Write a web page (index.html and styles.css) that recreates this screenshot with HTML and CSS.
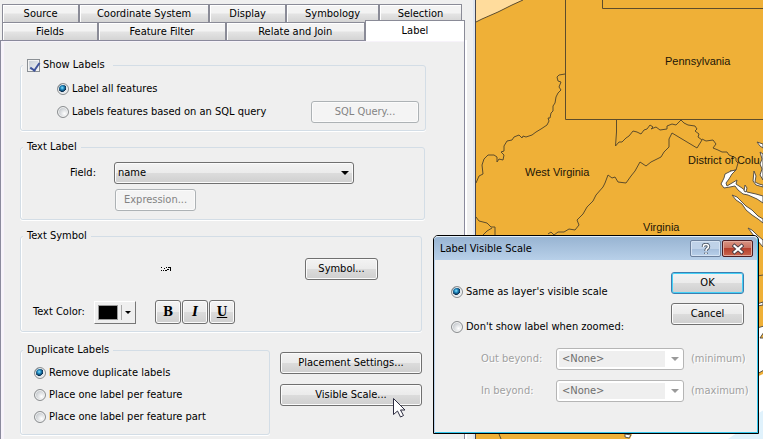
FILE: index.html
```html
<!DOCTYPE html>
<html lang="en">
<head>
<meta charset="utf-8">
<title>Label Visible Scale</title>
<link rel="stylesheet" href="styles.css">
</head>
<body>
<main class="workspace">
  <section class="properties">
    <nav class="tabs">
      <div class="tab-row back">
        <button class="tab t-source">Source</button>
        <button class="tab t-coord">Coordinate System</button>
        <button class="tab t-display">Display</button>
        <button class="tab t-symb">Symbology</button>
        <button class="tab t-select">Selection</button>
      </div>
      <div class="tab-row front">
        <button class="tab t-fields">Fields</button>
        <button class="tab t-filter">Feature Filter</button>
        <button class="tab t-relate">Relate and Join</button>
        <button class="tab active">Label</button>
      </div>
    </nav>
    <form class="page">
      <fieldset class="group show">
        <legend class="check-legend"><label class="option"><input class="check" type="checkbox" checked>Show Labels</label></legend>
        <label class="option"><input class="radio" type="radio" name="which" checked>Label all features</label>
        <div class="split">
          <label class="option"><input class="radio" type="radio" name="which">Labels features based on an SQL query</label>
          <button class="btn sql" type="button" disabled>SQL Query...</button>
        </div>
      </fieldset>

      <fieldset class="group text-label">
        <legend>Text Label</legend>
        <label class="field-name" for="field">Field:</label>
        <span class="combo"><select id="field"><option>name</option></select></span>
        <button class="btn expression" type="button" disabled>Expression...</button>
      </fieldset>

      <fieldset class="group text-symbol">
        <legend>Text Symbol</legend>
        <div class="sample-row">
          <svg class="sample" viewBox="0 0 12 6" aria-hidden="true"><path d="M1 1h1v1H1zM1 4h1v1H1zM3 4h1v1H3zM5 4h2v1H5zM4 2h1v1H4zM6 1h1v1H6zM7 3h1v1H7zM8 1h3v1H8zM10 1h1v4h-1zM8 3h1v1H8z"/></svg>
          <button class="btn symbol" type="button">Symbol...</button>
        </div>
        <div class="style-row">
          <span class="color-name" id="color-name">Text Color:</span>
          <button class="color" type="button" aria-labelledby="color-name"><span class="swatch"></span><span class="rule"></span><span class="arrow"></span></button>
          <div class="formats">
            <button class="format" type="button">B</button>
            <button class="format italic" type="button">I</button>
            <button class="format underline" type="button">U</button>
          </div>
        </div>
      </fieldset>

      <div class="bottom">
        <fieldset class="group duplicates">
          <legend>Duplicate Labels</legend>
          <label class="option"><input class="radio" type="radio" name="dup" checked>Remove duplicate labels</label>
          <label class="option"><input class="radio" type="radio" name="dup">Place one label per feature</label>
          <label class="option"><input class="radio" type="radio" name="dup">Place one label per feature part</label>
        </fieldset>
        <div class="actions">
          <button class="btn" type="button">Placement Settings...</button>
          <button class="btn" type="button">Visible Scale...
            <svg class="cursor" viewBox="0 0 13 20" aria-hidden="true"><path d="M.5 .5V16.500L4.500 13 7.500 19 10.500 17.500 7.500 12H12z" fill="#fff" stroke="#2c2c40"/></svg>
          </button>
        </div>
      </div>
    </form>
  </section>

  <section class="map">
    <svg viewBox="476 0 287 439" preserveAspectRatio="xMinYMin slice">
      <path class="pale" d="M476 0H523L512 5 498 12 476 22z"/>
      <g class="line">
        <path d="M476 22L482 19 498 12 512 5 523 0"/>
        <path d="M565.500 0V119.500H763M602.500 0V8.500H763"/>
        <path d="M565 74L559 75 557 77 558 81 561 82 559 87 561 90 558 93 556 97 555 103 553 106 553 111 551 113 550 118 548 118 549 121 547 125 541 129 536 132 532 135 526 137 523 136 522 138 519 135 514 137 512 140 507 141 504 146 504 151 501 152 504 155 503 160 499 159 497 162 497 157 494 155 488 155 484 159 482 165 483 174 479 176 476 183"/>
        <path d="M616.500 119V132L615.500 146 619 142 622 142 626 138 629 136 633 131 637 132 641 134 644 130 647 129 650 125 653 127 651 129 656 127 660 130 667 129 667 126 672 124 676 125 681 120 684 123 688 125 695 126 697 129 695 131 699 134 698 137 702 140 697 148 672 133 669 139 669 147 664 152 661 157 655 160 651 162 646 166 640 162 635 171 631 176 626 183 618 182 615 177 612 178 608 175 605 183 603 187 596 195 593 201 587 207 583 214 577 220 579 225 575 230 569 229 564 232 558 232 554 235 551 232 548 234"/>
        <path d="M702 139L706 141 713 140 716 144 713 148 718 150 722 152 727 152 729 155 736 158 736 161 738 163 736 170 730 171M476 217L479 221 487 223 491 227 495 227 495 235M483 235L487 231 492 228M499 434L501 439"/>
      </g>
      <g class="water">
        <path d="M731 171L736 170 732 174 729 179 726 183 727 186 732 183 737 180 736 184 742 188 747 192 756 194 763 196V203L757 199 748 195 743 194 738 190 735 186 730 187 724 188 721 184 724 178 725 174z"/>
        <path d="M732 195L737 197 741 201 746 206 752 210 758 216 763 219V223L758 219 752 215 746 210 742 204 736 200z"/>
        <path d="M748 228L752 230 757 235 763 240V247L757 240z"/>
        <path d="M757 142L763 144V148L760 146zM754 171L756 176 755 182 759 184 763 185V187L756 185 753 181zM760 152L763 154V180L760 175 762 169 760 164 762 159zM745 185L747 188 746 192 744 191z"/>
        <path d="M757 276L763 275M757 304L763 302V305L757 306zM757 328L764 326V332L760 338H764V370L757 374z"/>
      </g>
      <path class="sea" d="M632 434L763 374V439H630z"/>
      <path class="shelf" d="M728 439L744 428 755 415 764 410V439z"/>
      <path class="water" d="M625 434L631 435 629 438 625 437z"/>
      <g class="place">
        <text x="665" y="65">Pennsylvania</text>
        <text x="525" y="176">West Virginia</text>
        <text x="688" y="164">District of Colu</text>
        <text x="643" y="231">Virginia</text>
      </g>
    </svg>
  </section>
</main>

<section class="dialog" role="dialog" aria-labelledby="dialog-title">
  <header class="title-bar">
    <h1 id="dialog-title">Label Visible Scale</h1>
    <button class="caption help" aria-label="Help"><svg viewBox="0 0 10 12"><path d="M2.500 4V3Q2.500 1.500 5 1.500T7.500 3.500Q7.500 5 6 5.700 5 6.300 5 8M5 9.500V11" fill="none" stroke="#4c5968" stroke-width="3.400"/><path d="M2.500 4V3Q2.500 1.500 5 1.500T7.500 3.500Q7.500 5 6 5.700 5 6.300 5 8M5 9.500V11" fill="none" stroke="#fff" stroke-width="1.600"/></svg></button>
    <button class="caption close" aria-label="Close"><svg viewBox="0 0 12 10"><path d="M2.500 2L9.500 8M9.500 2L2.500 8" stroke="#4b3e46" stroke-width="4" stroke-linecap="square"/><path d="M2.500 2L9.500 8M9.500 2L2.500 8" stroke="#fff" stroke-width="2.200" stroke-linecap="square"/></svg></button>
  </header>
  <form class="dialog-body">
    <div class="choices">
      <label class="option"><input class="radio" type="radio" name="scale" checked>Same as layer's visible scale</label>
      <label class="option"><input class="radio" type="radio" name="scale">Don't show label when zoomed:</label>
    </div>
    <div class="confirm">
      <button class="btn ok" type="button">OK</button>
      <button class="btn" type="button">Cancel</button>
    </div>
    <div class="ranges">
      <label for="out">Out beyond:</label>
      <span class="combo off"><select id="out" disabled><option>&lt;None&gt;</option></select></span>
      <span>(minimum)</span>
      <label for="in">In beyond:</label>
      <span class="combo off"><select id="in" disabled><option>&lt;None&gt;</option></select></span>
      <span>(maximum)</span>
    </div>
  </form>
</section>
</body>
</html>
```

FILE: styles.css
```css
* { box-sizing: border-box; }

body {
  margin: 0;
  background: #efefef;
  color: #000;
  font: 11px/14px "DejaVu Sans Condensed", Tahoma, sans-serif;
}

button, select, input { font: inherit; color: inherit; margin: 0; }

.workspace {
  display: grid;
  grid-template-columns: 475fr 288fr;
  min-height: 100vh;
}

.properties {
  display: flex;
  flex-direction: column;
  padding: 4px 8px 0 0;
  border-right: 2px solid #dfe6f0;
}

/* Tabs */
.tabs { padding-left: 2px; }
.tab-row { display: flex; height: 18px; }
.back { margin-right: 3px; }
.tab {
  flex: 1 1 0;
  height: 18px;
  padding: 1px 0 0;
  border: 1px solid #8a8b97;
  border-bottom: 0;
  background: linear-gradient(#f3f3f3 45%, #e3e3e3 55%, #d4d4d4);
  box-shadow: inset 1px 1px #fff;
  white-space: nowrap;
}
.t-source { flex-grow: 77; }
.t-coord { flex-grow: 131; }
.t-display { flex-grow: 77; }
.t-symb { flex-grow: 93; }
.t-select { flex-grow: 83; }
.t-fields { flex-grow: 96; }
.t-filter { flex-grow: 128; }
.t-relate { flex-grow: 140; }
.front .active {
  flex-grow: 100;
  height: 21px;
  margin: -2px 0 -1px;
  padding: 0;
  background: #fff;
  box-shadow: none;
  position: relative;
}

/* Label page */
.page {
  flex: 1;
  padding: 17px 38px 0 19px;
  border: solid #8a8a9c;
  border-width: 1px 1px 0;
  box-shadow: inset 3px 1px #f7f3fa, 2px 0 #fff;
}

.group {
  min-width: 0;
  margin: 0;
  padding: 0;
  border: 1px solid #d3dde6;
  border-radius: 3px;
  box-shadow: inset 1px 0 #fff, 0 1px #fff;
}
legend { margin-left: 2px; padding: 0 4px; line-height: 14px; }

.option { display: flex; align-items: center; gap: 3px; white-space: nowrap; }

.radio, .check { appearance: none; flex: none; }
.radio {
  width: 12px;
  height: 12px;
  border: 1px solid #8b8e90;
  border-radius: 50%;
  background: radial-gradient(circle at 65% 65%, #fff, #c8ccd0 65%);
  box-shadow: inset 0 0 0 1px #f4f4f4;
}
.radio:checked {
  background: radial-gradient(circle at 42% 38%, #8be4ff, #1d86bd 22%, #0b2b4b 45%, #dfe4e8 50%);
}
.check {
  width: 13px;
  height: 13px;
  border: 1px solid #8a8f94;
  background: linear-gradient(135deg, #c4cbd3, #f5f6f8);
  box-shadow: inset 0 0 0 1px #f4f4f4;
}
.check:checked::before {
  content: "";
  display: block;
  width: 4px;
  height: 8px;
  margin: 1px 0 0 4px;
  border: solid #3f549c;
  border-width: 0 2px 2px 0;
  transform: rotate(35deg);
}

.btn {
  position: relative;
  height: 22px;
  padding: 0 8px;
  border: 1px solid #707070;
  border-radius: 3px;
  background: linear-gradient(#f3f3f3, #ebebeb 48%, #dcdcdc 50%, #cfcfcf);
  box-shadow: inset 0 0 0 1px #fbfbfb;
  white-space: nowrap;
}
.btn:disabled { border-color: #adb2b5; background: #f4f4f4; color: #838383; }

.combo { position: relative; display: block; }
.combo select {
  appearance: none;
  display: block;
  width: 100%;
  height: 22px;
  padding: 0 3px;
  border: 1px solid #707070;
  border-radius: 3px;
  background: linear-gradient(#f3f3f3, #ebebeb 48%, #dcdcdc 50%, #cfcfcf);
  box-shadow: inset 0 0 0 1px #fbfbfb;
  opacity: 1;
}
.combo::after {
  content: "";
  position: absolute;
  top: 9px;
  right: 5px;
  border: 4px solid transparent;
  border-top-color: #000;
  border-bottom: 0;
}
.combo.off select {
  padding: 0 5px;
  border-color: #b5b5b5;
  background: linear-gradient(to left, #fff 18px, #efefef 18px);
  box-shadow: inset 0 0 0 2px #fff;
  color: #6d6d6d;
}
.combo.off::after { border-top-color: #9a9a9a; }

.show { height: 73px; }
.check-legend { padding: 0 8px 0 4px; }
.show > .option { margin: 10px 0 0 36px; }
.split {
  display: flex;
  justify-content: space-between;
  margin: 5px 6px 0 36px;
}
.sql { width: 108px; }

.text-label {
  display: grid;
  grid-template-columns: 93px minmax(0, 240px);
  align-content: start;
  gap: 5px 0;
  height: 80px;
  margin: 9px 1px 0 0;
  padding-top: 8px;
}
.field-name { justify-self: end; align-self: center; margin-right: 18px; }
.expression { grid-column: 2; justify-self: start; width: 81px; margin-left: 1px; }

.text-symbol { height: 103px; margin: 9px 4px 0 0; }
.sample-row {
  display: flex;
  align-items: center;
  justify-content: space-between;
  margin: 15px 43px 0 139px;
}
.sample { width: 12px; height: 6px; }
.symbol { width: 73px; }
.style-row { display: flex; align-items: center; margin: 20px 0 0 12px; }
.color-name { flex: 0 0 61px; white-space: nowrap; }
.color {
  display: flex;
  align-items: center;
  justify-content: space-between;
  width: 42px;
  height: 23px;
  padding: 0 4px 0 3px;
  border: 1px solid;
  border-color: #fff #777 #777 #fff;
  background: #efefef;
}
.swatch { width: 20px; height: 15px; border: 1px solid #999; background: #000; }
.rule { width: 1px; height: 15px; background: #aaa; }
.arrow { border: 3px solid transparent; border-top-color: #000; border-bottom: 0; }
.formats { display: flex; gap: 1px; margin-left: 19px; }
.format {
  width: 26px;
  height: 24px;
  padding: 0;
  border: 1px solid #707070;
  border-radius: 3px;
  background: linear-gradient(#f3f3f3, #ebebeb 48%, #dcdcdc 50%, #cfcfcf);
  box-shadow: inset 0 0 0 1px #fbfbfb;
  font: bold 12px "DejaVu Serif", serif;
}
.italic { font-style: italic; }
.underline { text-decoration: underline; }

.bottom { display: flex; gap: 10px; margin-top: 11px; margin-right: 4px; }
.duplicates { flex: 0 0 250px; height: 92px; }
.duplicates .option { margin: 0 0 8px 13px; }
.duplicates legend + .option { margin-top: 9px; }
.actions { flex: 1; display: grid; gap: 10px; align-content: start; padding-top: 9px; }
.cursor { position: absolute; left: 112px; top: 13px; width: 13px; height: 20px; }

/* Map */
.map { position: relative; overflow: hidden; border-left: 1px solid #45454f; background: #efb037; }
.map svg { position: absolute; inset: 0; width: 100%; height: 100%; }
.pale { fill: #ffdc9c; }
.line { fill: none; stroke: #5d4c2b; stroke-width: 1; }
.water { fill: #fff; stroke: #5b5346; stroke-width: 1; }
.sea { fill: #fff; }
.shelf { fill: #e0f2fc; }
.place { font: 11px "Liberation Sans", sans-serif; fill: #1c1607; stroke: none; }

/* Dialog */
.dialog {
  position: absolute;
  left: 433px;
  top: 235px;
  width: 326px;
  border: 1px solid #000;
  border-radius: 5px 5px 0 0;
  background: #efefef;
  box-shadow: inset 1px 0 #b9d1ea, inset -1px -1px #35c8ee;
}
.title-bar {
  display: flex;
  align-items: center;
  gap: 1px;
  height: 24px;
  margin-right: 1px;
  padding: 0 4px 0 6px;
  border-top: 1px solid #e4f0fa;
  border-radius: 4px 4px 0 0;
  background: linear-gradient(#98b4d2, #b8d0e9);
}
.title-bar h1 { flex: 1; margin: 0; font: inherit; }
.caption {
  display: grid;
  place-items: center;
  width: 31px;
  height: 17px;
  padding: 0;
  border: 1px solid #6c809c;
  border-radius: 2px;
  box-shadow: inset 0 0 0 1px #d5e3f3;
  background: linear-gradient(#bfd2e8 50%, #a5bedb 50%, #b8d0ea);
}
.caption svg { width: 12px; height: 12px; }
.close {
  border-color: #4c1c22;
  background: linear-gradient(#d99584, #c9705f 48%, #b5402d 50%, #ca6650);
  box-shadow: inset 0 0 0 1px #e2ab9f;
}
.dialog-body {
  display: grid;
  grid-template-columns: 1fr 73px;
  padding: 12px 14px 31px 17px;
}
.choices { display: grid; gap: 21px; align-content: start; padding-top: 13px; }
.confirm { display: grid; gap: 9px; align-content: start; }
.ok { border-color: #3c7fb1; box-shadow: inset 0 0 0 1px #45d1f7; }
.ranges {
  grid-column: 1 / -1;
  display: grid;
  grid-template-columns: 68px 128px auto;
  gap: 10px 7px;
  align-items: center;
  margin: 14px 0 0 30px;
  color: #a0a0a0;
  text-shadow: 1px 1px #fff;
}
```
